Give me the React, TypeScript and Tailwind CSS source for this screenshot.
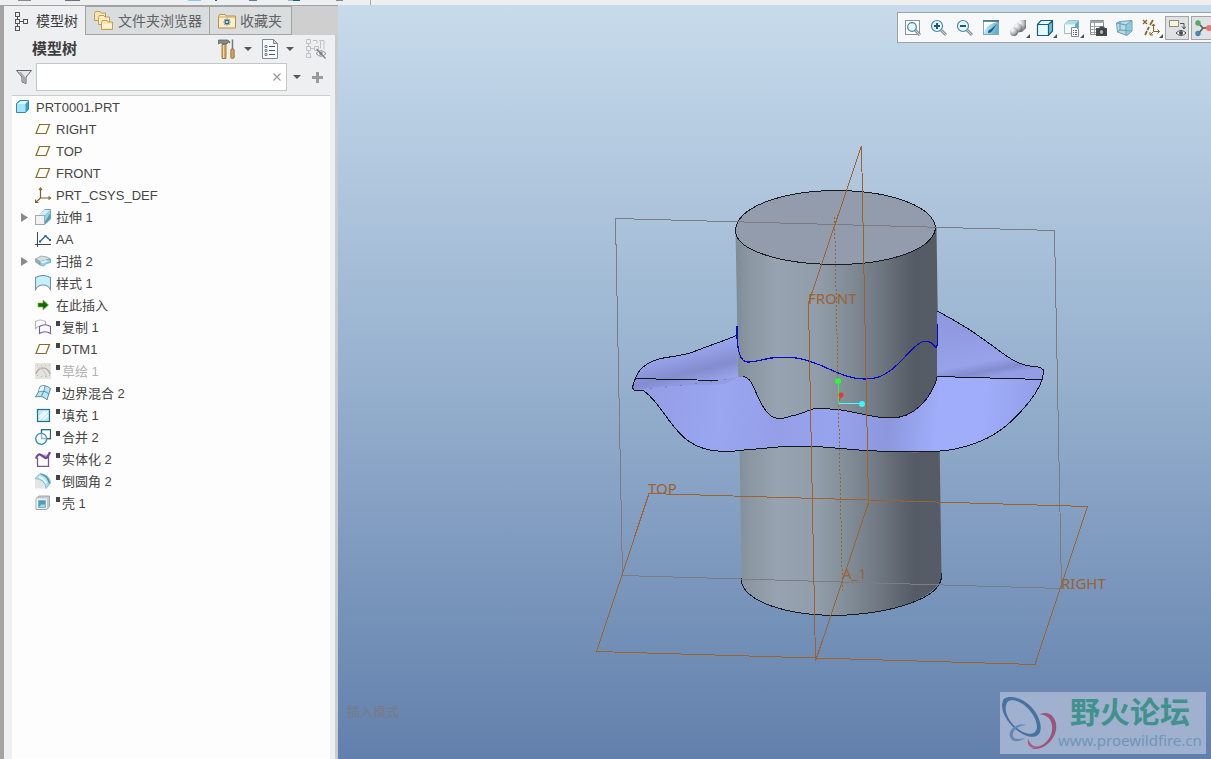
import React from "react";

type IconName =
  | "plane" | "csys" | "extrude" | "curve" | "sweep" | "style" | "insert" | "copy"
  | "sketch" | "boundary" | "fill" | "merge" | "solidify" | "round" | "shell";

type TreeItem = { icon: IconName; label: string; expandable?: boolean; marked?: boolean; muted?: boolean };

const treeItems: TreeItem[] = [
  { icon: "plane", label: "RIGHT" },
  { icon: "plane", label: "TOP" },
  { icon: "plane", label: "FRONT" },
  { icon: "csys", label: "PRT_CSYS_DEF" },
  { icon: "extrude", label: "拉伸 1", expandable: true },
  { icon: "curve", label: "AA" },
  { icon: "sweep", label: "扫描 2", expandable: true },
  { icon: "style", label: "样式 1" },
  { icon: "insert", label: "在此插入" },
  { icon: "copy", label: "复制 1", marked: true },
  { icon: "plane", label: "DTM1", marked: true },
  { icon: "sketch", label: "草绘 1", marked: true, muted: true },
  { icon: "boundary", label: "边界混合 2", marked: true },
  { icon: "fill", label: "填充 1", marked: true },
  { icon: "merge", label: "合并 2", marked: true },
  { icon: "solidify", label: "实体化 2", marked: true },
  { icon: "round", label: "倒圆角 2", marked: true },
  { icon: "shell", label: "壳 1", marked: true },
];

const iconArt: Record<IconName, React.ReactNode> = {
  plane: <path d="M4.500 3.500h10l-3.500 9h-10z" fill="#fffdf5" stroke="#856a33" strokeWidth="1.200" />,
  csys: (
    <g stroke="#80622a" strokeWidth="1.200" fill="none">
      <path d="M5.500 1v10h10M5.500 11L1 15" />
      <path d="M4 3l1.500-2L7 3M13.500 9.500l2 1.500-2 1.500M0.500 12.500V15.500H3.500" />
    </g>
  ),
  extrude: (
    <g>
      <path d="M5 5L10 0.500H15.500V10L10 15z" fill="#4f9dbd" stroke="#7fa3b3" />
      <path d="M3 6.500L9 1h6.500L10 6.500z" fill="#cfecf7" />
      <path d="M10 6.500l5-5v8.500l-5 5z" fill="#4d9fc2" />
      <path d="M10 6.500l5-5v3l-5 8z" fill="#9ad2e6" />
      <rect x="0.500" y="6.500" width="9" height="9" fill="#f2f2f2" stroke="#a8a8a8" />
    </g>
  ),
  curve: (
    <g fill="none">
      <path d="M2.500 1v15M0 13.500h16" stroke="#444" />
      <path d="M5 10.500L10.500 5 15 9" stroke="#246a94" strokeWidth="1.300" />
      <path d="M4 9.500h2v2H4zM9.500 4h2v2h-2zM14 8h2v2h-2z" fill="#246a94" />
    </g>
  ),
  sweep: (
    <g strokeWidth="0.700">
      <path d="M0.500 6L6 3l6 1 3.500 2-5 1.500L5 9z" fill="#d8dcdd" stroke="#8c979b" />
      <path d="M0.500 6v3L5 12V8.500z" fill="#a5adb0" stroke="#8c979b" />
      <path d="M5 8.500L11 7l4.500-1v3.500l-4 1-3 2.500L5 12z" fill="#8ed4ef" stroke="#5a9ab3" />
      <path d="M5 8.500L11 7l2 1-5 2.500z" fill="#d8f3fc" />
    </g>
  ),
  style: <path d="M0.500 2.500Q8-1.500 15.500 2.500V14.500Q13 10 8 10T0.500 14.500z" fill="#c6efff" stroke="#7790a0" strokeWidth="1.100" />,
  insert: <path d="M3 6h5V3l5.500 5L8 13v-3H3z" fill="#096b09" stroke="#8fb52a" strokeWidth="0.700" />,
  copy: (
    <g strokeWidth="1.100">
      <path d="M0.500 2.500Q5-0.500 10.500 2.500V8.500Q5 5 0.500 9.500z" fill="#fff" stroke="#b5b5b5" />
      <path d="M4.500 7.500Q10 4 15.500 7.500V14.500Q10 11 4.500 14.500z" fill="#fdfaff" stroke="#815aa5" />
    </g>
  ),
  sketch: (
    <g>
      <rect width="16" height="16" fill="#e3e2df" />
      <path d="M2 2h1v1H2zM6 2h1v1H6zM10 2h1v1h-1zM14 2h1v1h-1zM2 12h1v1H2zM6 13h1v1H6zM10 13h1v1h-1zM14 12h1v1h-1z" fill="#bdb9ad" />
      <path d="M1 11Q3 5 8 5T15 11" fill="none" stroke="#b5b199" strokeWidth="1.500" />
      <path d="M3 5Q8 4 12 14" fill="none" stroke="#cbc8bd" />
    </g>
  ),
  boundary: (
    <g stroke="#557f92" strokeWidth="0.900">
      <path d="M5 1.500Q10-1 15.500 3.500Q14 8 12 15Q8 10 0.500 12Q4 7 5 1.500z" fill="#b9e6f7" />
      <path d="M3 7Q9 4.500 14 9M10 1Q9 7 6.500 11" fill="none" />
      <path d="M5.500 2Q8 1 9.500 1.500L8.500 5.500Q6 5.500 3.500 6.500z" fill="#e9f8fd" stroke="none" />
    </g>
  ),
  fill: (
    <g>
      <rect x="2.500" y="2.500" width="12" height="12" fill="#bceaf8" stroke="#26708f" strokeWidth="1.200" />
      <path d="M4 10l6-6M4 13l9-9M8 13l5-5" stroke="#fff" strokeWidth="1.200" />
    </g>
  ),
  merge: (
    <g strokeWidth="1.300">
      <rect x="6.500" y="0.700" width="9" height="9" fill="#fff" stroke="#1e668a" />
      <circle cx="6.200" cy="9.800" r="5.500" fill="#f0fbff" stroke="#3687ab" />
      <path d="M6.500 4.500V9.500H11.500" fill="none" stroke="#a5b8c0" />
    </g>
  ),
  solidify: (
    <g fill="none">
      <path d="M2.500 7v8.500h11V5" fill="#fff" stroke="#7b5794" strokeWidth="1.300" />
      <path d="M6 3.500h8l-4 4z" fill="#c5b5dc" />
      <path d="M1 7.500Q3 2 6 4T10.500 7T15 1" stroke="#754798" strokeWidth="2.200" />
    </g>
  ),
  round: (
    <g>
      <path d="M0 5.500Q9 5 10 15.500H0z" fill="#e3e5e7" />
      <path d="M5 0.500Q15 2 15.500 10L11 15.500Q10 6 0 5.500z" fill="#a9e1f4" stroke="#81a8b7" strokeWidth="0.800" />
      <path d="M5 1Q12 3 14 11l1-1Q14 3 7 1z" fill="#3f91b7" />
      <path d="M4 4Q9 5 11 10" stroke="#f1fcff" strokeWidth="2" fill="none" />
    </g>
  ),
  shell: (
    <g>
      <path d="M1 3.500L4 1H14.500V11.500L12 14.500H1z" fill="#c0cacf" stroke="#94a0a6" strokeWidth="0.900" />
      <path d="M1.500 3.500h10.500v10.500H1.500z" fill="#edf0f1" />
      <path d="M3.500 5.500h7v7h-7z" fill="#4a9fbf" stroke="#8ab1be" />
      <path d="M4 12h6V9.500h-4z" fill="#a3d7e8" />
    </g>
  ),
};

function CubeIcon() {
  return (
    <svg viewBox="0 0 16 16" className="h-4 w-4 shrink-0">
      <path d="M0.500 5Q0.500 4 4 1.500H12.500V10L9.500 13.500H0.500z" fill="#3a9fcb" stroke="#3488ad" />
      <path d="M1 5L4.500 2H12L9.500 5z" fill="#dff6fe" />
      <path d="M1 5h8.500v8H1z" fill="#a2e6fb" />
    </svg>
  );
}

function Caret() {
  return (
    <svg viewBox="0 0 8 4" className="h-1 w-2">
      <path d="M0 0h8L4 4z" fill="#56575a" />
    </svg>
  );
}

function StructureIcon() {
  return (
    <svg viewBox="0 0 14 20" className="h-5 w-3.5" fill="none" stroke="#555" shapeRendering="crispEdges">
      <path d="M1.500 1.500h4v4h-4zM1.500 8.500h4v4h-4zM1.500 15.500h4v4h-4zM9.500 8.500h4v4h-4zM3.500 5.500v3M3.500 12.500v3M5.500 10.500h4" />
    </svg>
  );
}

function FoldersIcon() {
  const folder = "M0.500 2.500L1.500 0.500H6L7 2H11.500V9.500H0.500z";
  return (
    <svg viewBox="0 0 20 20" className="h-5 w-5" stroke="#b28c4b" strokeWidth="0.800">
      <path d={folder} fill="#fbe4b2" />
      <path d={folder} transform="translate(4 4)" fill="#fdebc0" />
      <path d={folder} transform="translate(7 9)" fill="#ffe4a9" />
      <path d="M8 13h10v4H8z" fill="#fff3d2" stroke="none" />
    </svg>
  );
}

function FavoriteIcon() {
  return (
    <svg viewBox="0 0 18 16" className="h-4 w-[18px]">
      <path d="M0.500 3.500L1.500 1.500H7L8 3h9.500v12H0.500z" fill="#ffedc3" stroke="#b58f4b" />
      <path d="M1 4h16" stroke="#c9a662" />
      <path d="M9 5.500v7M5.500 9h7M6.500 6.500l5 5M11.500 6.500l-5 5" stroke="#23668e" strokeWidth="1.100" />
      <circle cx="9" cy="9" r="1" fill="#fff" />
    </svg>
  );
}

function ToolsIcon() {
  return (
    <svg viewBox="0 0 18 20" className="h-5 w-[18px]">
      <path d="M0.500 1h9q2 0.500 2.500 3l-2-1-1 2H4L3 3.500 0.500 5z" fill="#86898c" stroke="#57595c" strokeWidth="0.700" />
      <path d="M4 5.500h4V19.500H4z" fill="#d9aa60" stroke="#8c6832" strokeWidth="0.800" />
      <path d="M5 6h1v13H5z" fill="#f6d79d" />
      <path d="M14.500 0.500v10" stroke="#777b7d" strokeWidth="1.500" />
      <rect x="12.800" y="10" width="3.400" height="9.300" rx="1" fill="#d5a353" stroke="#8c6832" strokeWidth="0.800" />
    </svg>
  );
}

function DocIcon() {
  return (
    <svg viewBox="0 0 16 20" className="h-5 w-4">
      <path d="M0.500 0.500h11l4 4v15H0.500z" fill="#f8fbfc" stroke="#7f898d" />
      <path d="M11.500 0.500v4h4z" fill="#cfd8dc" stroke="#7f898d" />
      <path d="M7 7.500h6M7 11.500h6M7 15.500h6" stroke="#535a5e" />
      <path d="M3 6.500h2v2H3zM3 10.500h2v2H3zM3 14.500h2v2H3z" fill="#fff" stroke="#5f676b" strokeWidth="0.800" />
    </svg>
  );
}

function HiddenTreeIcon() {
  return (
    <svg viewBox="0 0 20 20" className="h-5 w-5" fill="none">
      <path d="M0.500 0.500h4v4h-4zM0.500 7.500h4v4h-4zM0.500 14.500h4v4h-4zM8.500 7.500h4v4h-4zM2.500 4.500v3M2.500 11.500v3M4.500 9.500h4M7 1.500h4v3M13 1.500h5v9M14.500 1.500v8" stroke="#bfc1c2" />
      <path d="M10 14.500q5-5.500 10 0q-5 5.500-10 0z" fill="#eef0f1" stroke="#898d90" />
      <circle cx="15" cy="14.500" r="1.800" fill="#8f9496" />
      <path d="M10.500 10l9 9.500" stroke="#7a7e80" strokeWidth="1.200" />
    </svg>
  );
}

function Magnifier({ sign }: { sign?: "plus" | "minus" }) {
  return (
    <svg viewBox="0 0 18 18" className="h-[18px] w-[18px]">
      {!sign && <rect x="1.500" y="1.500" width="14" height="14" fill="#fafcfd" stroke="#8b9196" />}
      <path d="M11 11l5 5" stroke="#8b9094" strokeWidth="3" />
      <path d="M11 11l5 5" stroke="#d3d6d8" strokeWidth="1" />
      <circle cx={sign ? 7 : 8} cy={sign ? 7 : 8} r={sign ? 5.500 : 4.300} fill="#e9f8fe" stroke="#4386a4" strokeWidth="1.200" />
      {sign && <path d={sign === "plus" ? "M4 7h6M7 4v6" : "M4 7h6"} stroke="#145c85" strokeWidth="2" />}
    </svg>
  );
}

const art = "h-[18px] w-[18px]";

type Tool = { label: string; icon: React.ReactNode; flyout?: boolean; pressed?: boolean };

const tools: Tool[] = [
  { label: "重新调整", icon: <Magnifier /> },
  { label: "放大", icon: <Magnifier sign="plus" /> },
  { label: "缩小", icon: <Magnifier sign="minus" /> },
  {
    label: "重画",
    icon: (
      <svg viewBox="0 0 18 18" className={art}>
        <defs>
          <linearGradient id="repaint" x1="0" y1="0" x2="1" y2="0.300">
            <stop offset="0" stopColor="#eefaff" />
            <stop offset="1" stopColor="#5fb0d0" />
          </linearGradient>
        </defs>
        <rect x="1.500" y="1.500" width="15" height="14" fill="url(#repaint)" stroke="#8da4ae" />
        <path d="M2 3h13Q5 5 2 13z" fill="#fff" />
        <path d="M1 2h16" stroke="#3c7188" strokeWidth="1.500" />
        <path d="M6 14q0-3.500 2.500-3.500L15 5l-4.500 6.500q-1.500 2.500-4.500 2.500z" fill="#14618c" />
      </svg>
    ),
  },
  {
    label: "显示样式",
    flyout: true,
    icon: (
      <svg viewBox="0 0 18 18" className={art}>
        <defs>
          <radialGradient id="metal" cx="0.300" cy="0.250" r="0.800">
            <stop offset="0" stopColor="#fff" />
            <stop offset="0.600" stopColor="#b5b8ba" />
            <stop offset="1" stopColor="#64686a" />
          </radialGradient>
        </defs>
        <path d="M8 4l4-3h5v8l-4 4H8z" fill="url(#metal)" />
        <circle cx="9" cy="9" r="4.500" fill="url(#metal)" />
        <circle cx="5" cy="13" r="4" fill="url(#metal)" />
      </svg>
    ),
  },
  {
    label: "截面",
    flyout: true,
    icon: (
      <svg viewBox="0 0 18 18" className={art}>
        <path d="M1.500 5.500L5 1.500H16.500V12L12.500 16.500H1.500z" fill="#e5f8fd" />
        <path d="M12.500 5.500l4-4V12l-4 4.500z" fill="#75bbd5" />
        <path d="M1.500 5.500L5 1.500H16.500V12L12.500 16.500H1.500zM1.500 5.500h11v11M12.500 5.500l4-4" fill="none" stroke="#145e82" strokeWidth="1.200" />
      </svg>
    ),
  },
  {
    label: "已保存方向",
    flyout: true,
    icon: (
      <svg viewBox="0 0 18 18" className={art}>
        <path d="M1.500 5.500L5 1.500H15.500V9L12 14.500H1.500z" fill="#f4f8fa" stroke="#9bc1cf" />
        <path d="M2 5.500L5 2h10l-3 3.500z" fill="#acddee" />
        <path d="M12 5.500l3.500-4V12H12z" fill="#5aaac8" />
        <path d="M8.500 8.500h5l2 2v7h-7z" fill="#fff" stroke="#838a8e" />
        <path d="M10 11.500h1M12 11.500h2M10 13.500h1M12 13.500h2M10 15.500h1M12 15.500h2" stroke="#596064" />
      </svg>
    ),
  },
  {
    label: "视图管理器",
    icon: (
      <svg viewBox="0 0 18 18" className={art}>
        <path d="M1.500 1.500h13v14h-13z" fill="#fff" stroke="#878d91" />
        <path d="M1 2h14v2H1z" fill="#a0a5a8" />
        <path d="M5.500 2v14M1.500 7.500h13M1.500 10.500h13M1.500 13.500h13" stroke="#9ea4a8" />
        <path d="M7 9h3l1-1.500h4L16 9h2v8H7z" fill="#444a4e" />
        <circle cx="12.500" cy="13" r="2.500" fill="#a9b4b9" stroke="#23282b" />
      </svg>
    ),
  },
  {
    label: "透视图",
    icon: (
      <svg viewBox="0 0 18 18" className={art}>
        <path d="M1.500 4L5 2.500l12-1V12l-5 4.500L2.500 13z" fill="#b4ddeb" stroke="#6f9dae" />
        <path d="M2 4l9 2 6-4.500M11 6v10M5 3v8l-2.500 2M5 11l12 1" fill="none" stroke="#6898aa" />
        <path d="M11 6l6-4V12l-5 4z" fill="#77bad3" fillOpacity="0.600" />
      </svg>
    ),
  },
  {
    label: "基准显示过滤器",
    flyout: true,
    icon: (
      <svg viewBox="0 0 18 18" className={art} fill="none" stroke="#876421">
        <path d="M1 1l4 4M5 1L1 5" strokeWidth="1.300" />
        <path d="M11 1L8 6M7 8l-1.500 3M5 12l-2 4" strokeWidth="1.700" />
        <path d="M11.500 5v7.500h6M11.500 12.500L8 16M10 7l1.500-2L13 7M15.500 10.500l2 2-2 2M8 13v3h3" />
      </svg>
    ),
  },
  {
    label: "注释显示",
    pressed: true,
    icon: (
      <svg viewBox="0 0 18 18" className={art}>
        <rect x="1.500" y="1.500" width="9" height="6" fill="#fff4d2" stroke="#8b8d8c" />
        <path d="M12 4.500h4v5M14 7.500l2 2.500 2-2.500" fill="none" stroke="#4f5254" />
        <path d="M8 14q5-5 10 0q-5 5-10 0z" fill="#fff" stroke="#484d51" />
        <circle cx="13" cy="14" r="2" fill="#43484b" />
      </svg>
    ),
  },
  {
    label: "旋转中心",
    pressed: true,
    icon: (
      <svg viewBox="0 0 18 18" className={art}>
        <path d="M4 4l5 5h7M9 9l-5 6" stroke="#54585b" strokeWidth="1.500" fill="none" />
        <circle cx="4" cy="4" r="2.700" fill="#4eab62" />
        <circle cx="4" cy="14.500" r="2.700" fill="#4387b0" />
        <circle cx="15" cy="9" r="3" fill="#ed746f" />
      </svg>
    ),
  },
];

function Scene() {
  return (
    <svg
      viewBox="338 5 873 754"
      preserveAspectRatio="xMidYMid slice"
      className="block h-full w-full font-['Noto_Sans','Noto_Sans_CJK_SC',sans-serif]"
      role="img"
      aria-label="PRT0001"
    >
      <defs>
        <linearGradient id="body" gradientUnits="userSpaceOnUse" x1="736" y1="0" x2="941" y2="0">
          <stop offset="0" stopColor="#7f8b95" />
          <stop offset="0.050" stopColor="#8995a1" />
          <stop offset="0.200" stopColor="#98a3b1" />
          <stop offset="0.400" stopColor="#929dab" />
          <stop offset="0.550" stopColor="#808c96" />
          <stop offset="0.680" stopColor="#727b85" />
          <stop offset="0.800" stopColor="#60666f" />
          <stop offset="0.870" stopColor="#555b64" />
          <stop offset="1" stopColor="#555c65" />
        </linearGradient>
        <linearGradient id="backLeft" gradientUnits="userSpaceOnUse" x1="690" y1="345" x2="700" y2="385">
          <stop offset="0" stopColor="#9aa5ee" />
          <stop offset="0.250" stopColor="#949fe5" />
          <stop offset="0.650" stopColor="#828cce" />
          <stop offset="1" stopColor="#98a3eb" />
        </linearGradient>
        <linearGradient id="backRight" gradientUnits="userSpaceOnUse" x1="975" y1="325" x2="985" y2="378">
          <stop offset="0" stopColor="#8f9ae0" />
          <stop offset="0.700" stopColor="#97a2ea" />
          <stop offset="0.880" stopColor="#828cce" />
          <stop offset="1" stopColor="#929de5" />
        </linearGradient>
        <linearGradient id="front" gradientUnits="userSpaceOnUse" x1="640" y1="400" x2="1040" y2="440">
          <stop offset="0" stopColor="#929de5" />
          <stop offset="0.200" stopColor="#9ba6f1" />
          <stop offset="0.350" stopColor="#949fe8" />
          <stop offset="0.480" stopColor="#97a3ed" />
          <stop offset="0.620" stopColor="#8c97dc" />
          <stop offset="0.740" stopColor="#9fadfa" />
          <stop offset="0.850" stopColor="#a0adfa" />
          <stop offset="1" stopColor="#929de6" />
        </linearGradient>
      </defs>

      <path d="M735.500 229L742 583C748 602 785 615 836 615.500C890 614 936 599 941.500 577L936.500 227z" fill="url(#body)" />
      <path d="M741.500 578V583C748 602 785 615 836 615.500C890 614 940 599 941.500 577V573" fill="none" stroke="#1b1c22" shapeRendering="crispEdges" />
      <path d="M735.500 231C736 206 785 190.500 838 190.500C892 191 935 207 935.500 229C931 251 887 264.500 835 264.500C779 264 736 250 735.500 231z" fill="#929cac" stroke="#1b1c22" shapeRendering="crispEdges" />

      <path d="M737 335C725 341 710 345 693 352C675 358 664 356 653 361C642 366 638 371 636 377C634 382 631 388 634 390H642C652 397 690 385 738 377z" fill="url(#backLeft)" />
      <path d="M937 311C945 315 957 322 967 328C990 343 1005 356 1013 360C1020 364 1027 366 1034 366.500C1041 367 1044 369 1043.500 372L1042 380L937 377z" fill="url(#backRight)" />
      <path
        d="M636 390H642C647 392 653 399 660 408C670 422 680 436 690 442C700 449 710 451 723 451.500C733 452 740 450 750 449.500L790 446H808C830 447 850 450 877 451C900 452 920 453 940 451C957 450 980 443 993 435C1015 422 1037 395 1042 380L937 377C936 384 929 398 920 406C912 414 903 418 890 418C878 418 872 416 867 415C855 413 843 409 830 409C824 408 818 408 813 409C806 411 799 415 791 416C785 418 780 420 774 417.500C763 413 757 393 751 382C748 378 746 376 743 377L738 377C700 385 660 386 636 390z"
        fill="url(#front)"
      />
      <path d="M668 386L738 377L725 384z" fill="#828ccb" fillOpacity="0.350" />

      <g fill="none" stroke="#15161e" shapeRendering="crispEdges">
        <path d="M737 335C725 341 710 345 693 352C675 358 664 356 653 361C642 366 638 371 636 377C634 382 631 388 634 390H642C647 392 653 399 660 408C670 422 680 436 690 442C700 449 710 451 723 451.500C733 452 740 450 750 449.500L790 446H808C830 447 850 450 877 451C900 452 920 453 940 451C957 450 980 443 993 435C1015 422 1037 395 1042 380L1043.500 372C1044 369 1041 367 1034 366.500C1027 366 1020 364 1013 360C1005 356 990 343 967 328C957 322 945 315 937 311" />
        <path d="M937 377C936 384 929 398 920 406C912 414 903 418 890 418C878 418 872 416 867 415C855 413 843 409 830 409C824 408 818 408 813 409C806 411 799 415 791 416C785 418 780 420 774 417.500C763 413 757 393 751 382C748 378 746 376 743 377" />
        <path d="M635 378.500L718 380.500M937 376.500L1042 379.500" />
        <path d="M650 389L738 378" strokeDasharray="2 13" stroke="#737eb9" />
      </g>
      <path
        d="M737 326V338C738 351 740 362 748 362C759 362 766 357 780 357.500C801 356 810 362 820 365C838 373 850 379 865 379C879 379 887 374 897 365C907 356 914 345 922 342C930 339 933 345 936 347.500L937.500 345V324"
        fill="none"
        stroke="#0909c5"
        strokeWidth="1.200"
        shapeRendering="crispEdges"
      />

      <g fill="none" shapeRendering="crispEdges">
        <path d="M615.500 218.500L1054.500 230.500L1061.500 588.500L622.500 575.500z" stroke="#7b7c84" />
        <path d="M861.500 146L808.500 303L815.500 661L868.500 503z" stroke="#9b632f" />
        <path d="M649 493.500L1087.500 506.500L1035 664.500L596.500 651.500z" stroke="#9b632f" />
        <path d="M834.500 217L842.500 590" stroke="#9b632f" strokeDasharray="2 2" />
        <path d="M838.500 404V381" stroke="#28f62e" />
        <path d="M838.500 403.500H862" stroke="#4effff" />
        <path d="M839 401L841 396" stroke="#ef3834" />
      </g>
      <circle cx="838" cy="381" r="3" fill="#29fb2e" />
      <circle cx="862" cy="404" r="3" fill="#35f8fc" />
      <circle cx="841" cy="395" r="2.500" fill="#fa302d" />
      <g fill="#9b632f" fontSize="15">
        <text x="808" y="304">FRONT</text>
        <text x="648" y="494">TOP</text>
        <text x="842" y="579">A_1</text>
        <text x="1061" y="589">RIGHT</text>
      </g>
      <text x="347" y="716" fill="#777b87" fontSize="13">插入模式</text>
    </svg>
  );
}

function Watermark() {
  return (
    <div className="absolute right-[5px] bottom-[5px] flex h-[62px] w-[206px] bg-[#9fb1cf]">
      <svg viewBox="0 0 60 62" className="h-[62px] w-[58px] shrink-0" preserveAspectRatio="xMinYMid meet">
        <path fillRule="evenodd" d="M4 6C12 0 33 8 40 26C45 39 41 47 30 45C16 42-4 20 4 6zM8 9C0 20 16 40 29 42C39 43 40 35 36 26C29 12 15 4 8 9z" fill="#47719f" />
        <path d="M41 22C51 17 60 26 58 38C56 50 43 61 32 57C46 57 54 46 54 36C54 27 49 23 41 22z" fill="#9e5478" />
        <path d="M29 47C27 57 36 60 44 53C39 57 32 56 29 47z" fill="#a45f7d" />
        <path d="M27 33C17 31 10 37 10 43C10 51 20 52 26 46C16 50 11 46 14 40C17 35 21 34 27 33z" fill="#6486b2" />
      </svg>
      <div className="flex min-w-0 flex-col whitespace-nowrap">
        <span className="h-[38px] pl-3 text-[30px] leading-[42px] font-bold text-[#41918d]">野火论坛</span>
        <span className="font-['Noto_Sans',sans-serif] text-[15px] leading-[21px] text-[#6c97b9]">www.proewildfire.cn</span>
      </div>
    </div>
  );
}

export default function App() {
  return (
    <div className="flex h-screen min-h-[540px] flex-col overflow-hidden bg-[#eeeff1] font-['Liberation_Sans','Noto_Sans_CJK_SC',sans-serif] text-[13px] text-[#454545]">
      <header className="h-[5px] shrink-0 overflow-hidden">
        <svg viewBox="0 0 380 5" className="block h-[5px] w-[380px]" shapeRendering="crispEdges">
          <path d="M18 0h13v1H18zM336 0h7v1h-7z" fill="#8a8a8a" />
          <path d="M65 0h15v1H65z" fill="#68707d" />
          <path d="M188 0h13v1h-13z" fill="#7ecbed" />
          <path d="M215 0h2v1h-2z" fill="#555" />
          <path d="M249 0h8v1h-8z" fill="#5b8298" />
          <path d="M288 0h5v1h-5z" fill="#87bcd0" />
          <path d="M293 0h7v1h-7z" fill="#0d6183" />
          <path d="M370 0h1v5h-1z" fill="#a9a9a9" />
        </svg>
      </header>

      <div className="flex min-h-0 flex-1">
        <aside className="flex w-[338px] shrink-0 flex-col border-t border-l-4 border-[#a5a3a2]">
          <nav className="flex h-[29px] shrink-0 bg-[#cfcfd0] text-sm">
            <button className="flex w-[81px] items-center gap-2 bg-[#eeeff1] pl-2.5 whitespace-nowrap text-[#3d3d3d]">
              <StructureIcon />
              模型树
            </button>
            <button className="flex w-[125px] items-center gap-1 border border-[#a3a3a3] bg-[#dadddd] pl-2 whitespace-nowrap text-[#606264]">
              <FoldersIcon />
              文件夹浏览器
            </button>
            <button className="flex w-[82px] items-center gap-1 border border-l-0 border-[#a3a3a3] bg-[#dadddd] pl-2 whitespace-nowrap text-[#606264]">
              <FavoriteIcon />
              收藏夹
            </button>
          </nav>

          <div className="flex min-h-0 flex-1 flex-col border-r-3 border-[#cacbcc] pr-[5px] pl-2">
            <div className="flex h-7 shrink-0 items-center pr-1 pl-5">
              <h1 className="flex-1 text-[15px] leading-7 font-bold text-[#3d3d3d]">模型树</h1>
              <div className="flex items-center gap-2.5">
                <button aria-label="设置" className="flex items-center gap-2"><ToolsIcon /><Caret /></button>
                <button aria-label="显示" className="flex items-center gap-2"><DocIcon /><Caret /></button>
                <button aria-label="隐藏项" className="ml-0.5"><HiddenTreeIcon /></button>
              </div>
            </div>

            <div className="flex h-8 shrink-0 items-start pr-[7px] pl-1">
              <svg viewBox="0 0 16 16" className="mt-1.5 mr-1 h-4 w-4 shrink-0">
                <path d="M0.500 1.500h15L10 8v6.500L6 13V8z" fill="#e5e6e7" stroke="#626568" />
                <path d="M9 8v6L6.500 13V8L3 3h2z" fill="#a5a8ab" />
              </svg>
              <div className="flex h-7 min-w-0 flex-1 border border-[#c4c7c8] bg-white">
                <input aria-label="搜索" className="min-w-0 flex-1 px-1 outline-none" />
                <button aria-label="清除" className="flex w-[18px] items-center justify-center">
                  <svg viewBox="0 0 8 8" className="h-2 w-2"><path d="M0.500 0.500l7 7M7.500 0.500l-7 7" stroke="#999" strokeWidth="1.200" /></svg>
                </button>
              </div>
              <button aria-label="过滤选项" className="flex h-7 w-[19px] items-center justify-center"><Caret /></button>
              <button aria-label="添加" className="ml-1.5 flex h-7 items-center">
                <svg viewBox="0 0 11 11" className="h-[11px] w-[11px]"><path d="M0 5.500h11M5.500 0v11" stroke="#9b9b9b" strokeWidth="3" /></svg>
              </button>
            </div>

            <div className="min-h-0 flex-1 overflow-hidden border-t border-[#c9cccd] bg-[#fdfdfd]">
              <div className="flex h-[22px] items-center gap-1 pl-1 leading-[22px]">
                <CubeIcon />
                <span className="pt-0.5">PRT0001.PRT</span>
              </div>
              <ul>
                {treeItems.map((item) => (
                  <li key={item.label} className="flex h-[22px] items-center leading-[22px] whitespace-nowrap">
                    <span className="flex w-[23px] shrink-0 justify-center pl-0.5">
                      {item.expandable && (
                        <svg viewBox="0 0 7 9" className="h-[9px] w-[7px]"><path d="M0 0l7 4.500L0 9z" fill="#898989" /></svg>
                      )}
                    </span>
                    <svg viewBox="0 0 16 16" className="mr-[5px] h-4 w-4 shrink-0">{iconArt[item.icon]}</svg>
                    {item.marked && <span className="mr-0.5 mb-2 h-[5px] w-1 bg-[#454545]" />}
                    <span className={item.muted ? "pt-0.5 text-[#b3b3b3]" : "pt-0.5"}>{item.label}</span>
                  </li>
                ))}
              </ul>
            </div>
          </div>
        </aside>

        <main className="relative min-w-0 flex-1 overflow-hidden bg-linear-to-b from-[#c7dbeb] via-[#96b0ce] to-[#6280ac]">
          <Scene />
          <div className="absolute top-[7px] right-0 flex h-[31px] w-[314px] items-center gap-0.5 overflow-hidden border border-r-0 border-[#9fa1a3] bg-[#f7f8f9] pl-[3px]">
            {tools.map((tool) => (
              <button
                key={tool.label}
                aria-label={tool.label}
                aria-pressed={tool.pressed}
                className={
                  "relative flex h-6 shrink-0 items-center justify-center " +
                  (tool.flyout ? "w-[25px] " : "w-6 ") +
                  (tool.pressed ? "border border-[#a2a4a6] bg-[#dfe1e3]" : "")
                }
              >
                {tool.icon}
                {tool.flyout && (
                  <svg viewBox="0 0 4 4" className="absolute right-0 bottom-0.5 h-1 w-1"><path d="M4 0v4H0z" fill="#505355" /></svg>
                )}
              </button>
            ))}
          </div>
          <Watermark />
        </main>
      </div>
    </div>
  );
}
